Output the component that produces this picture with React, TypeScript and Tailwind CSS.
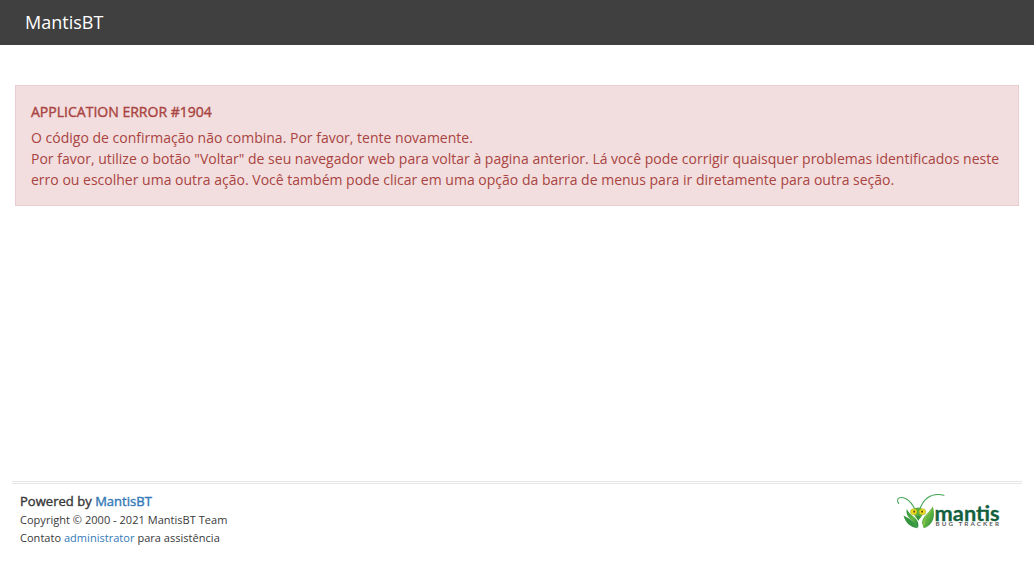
function MantisLogo() {
  return (
    <svg width="110" height="42" viewBox="0 0 110 42" role="img" aria-label="Mantis Bug Tracker">
      <defs>
        <linearGradient id="leaf" x1="0" y1="0" x2="1" y2="1">
          <stop offset="0" stopColor="#239044" />
          <stop offset="0.5" stopColor="#65b83f" />
          <stop offset="1" stopColor="#198143" />
        </linearGradient>
      </defs>
      <g fill="none" strokeLinecap="round">
        <path d="M19.5 18.5 C15 9.5 8.5 6.5 4.5 7.8 C2 8.8 2 11.5 3.7 13.3" stroke="#4ca758" strokeWidth="1.1" />
        <path d="M25 18.5 C29 8.5 37 2.5 49 5.2" stroke="#3fa04f" strokeWidth="1.1" />
      </g>
      <path d="M11.8 19 C10.5 24 13.5 28 17 30.5 L23 37.8 C24.5 32.5 21.5 29 18.5 26.5 C15.5 24 13 22 11.8 19 Z" fill="url(#leaf)" />
      <path d="M8.5 25.5 C13 28 19 30 22.8 38.2 C15.5 37.5 10.5 33 8.5 25.5 Z" fill="#35963f" />
      <path d="M37.8 16.5 C34 23 27.5 26 27 33 L28.8 38.3 C36 35.5 41.5 29 37.8 16.5 Z" fill="url(#leaf)" />
      <path d="M35.5 21 C32 25 28.5 28 29 35" fill="none" stroke="#b7d957" strokeWidth="0.8" />
      <path d="M18 19.5 Q23 15.5 28 19.5 Q29 25 23.5 30 Q18 26 18 19.5 Z" fill="#58ad3e" />
      <path d="M21.5 26 L25 26 L23.5 31 Q22 29 21.5 26 Z" fill="#308f3b" />
      <ellipse cx="18.8" cy="21.8" rx="3.3" ry="3" fill="#f1df20" stroke="#9cab22" strokeWidth="0.6" />
      <ellipse cx="27.4" cy="21.8" rx="3.3" ry="3" fill="#f1df20" stroke="#9cab22" strokeWidth="0.6" />
      <circle cx="19.2" cy="21.7" r="1.1" fill="#665a16" />
      <circle cx="27" cy="21.7" r="1.1" fill="#665a16" />
      <text x="39.6" y="31" textLength="65" lengthAdjust="spacingAndGlyphs" fill="#12613e" stroke="#12613e" strokeWidth="0.3" className="font-['Lato',sans-serif] text-[21.5px] font-bold">
        mantis
      </text>
      <text x="40.6" y="36.3" textLength="63.5" fill="#5c5c5c" className="font-['Lato',sans-serif] text-[6.3px] font-bold">
        BUG TRACKER
      </text>
    </svg>
  );
}

export default function App() {
  return (
    <div className="flex h-[578px] flex-col bg-white font-['Open_Sans',sans-serif] text-[13px] text-[#393939]">
      <header className="flex h-[45px] shrink-0 items-center bg-[#404040] px-[25px] text-[18px] text-white">
        <a href="#">MantisBT</a>
      </header>
      <main className="flex-1 px-[15px] pt-10">
        <section className="h-[121px] border border-[#ebccd1] bg-[#f2dede] p-[15px] text-[14px] leading-[21px] text-[#a94442]">
          <p className="mb-[5px] tracking-[0.01px] [-webkit-text-stroke:0.4px]">APPLICATION ERROR #1904</p>
          <p className="tracking-[0.006px]">O código de confirmação não combina. Por favor, tente novamente.</p>
          <p className="tracking-[0.006px]">
            Por favor, utilize o botão "Voltar" de seu navegador web para voltar à pagina anterior. Lá você pode corrigir quaisquer problemas identificados neste erro ou escolher uma outra ação. Você também pode clicar em uma opção da barra de menus para ir diretamente para outra seção.
          </p>
        </section>
      </main>
      <footer className="mx-3 flex h-[97px] shrink-0 justify-between border-t-[3px] border-double border-[#e5e5e5] pt-2 pr-[17px] pl-2">
        <div className="text-[11px] leading-[18px] tracking-[0.03px]">
          <p className="text-[13px] leading-[19px] [-webkit-text-stroke:0.4px]">
            Powered by <a href="#" className="text-[#337ab7]">MantisBT</a>
          </p>
          <p>Copyright © 2000 - 2021 MantisBT Team</p>
          <p>
            Contato <a href="#" className="text-[#337ab7]">administrator</a> para assistência
          </p>
        </div>
        <a href="#" className="-mt-[2px]">
          <MantisLogo />
        </a>
      </footer>
    </div>
  );
}
